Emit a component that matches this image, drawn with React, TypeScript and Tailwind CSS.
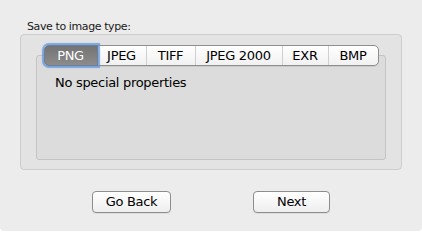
export default function App() {
  const tabs = [
    { label: 'PNG', w: 'w-[54px]' },
    { label: 'JPEG', w: 'w-[48px]' },
    { label: 'TIFF', w: 'w-[49px]' },
    { label: 'JPEG 2000', w: 'w-[87px]' },
    { label: 'EXR', w: 'w-[46px]' },
    { label: 'BMP', w: 'w-[50px]' },
  ];

  return (
    <div className="w-[422px] h-[231px] bg-[#ececec] flex flex-col pt-[20px] px-[20px] text-black font-['DejaVu_Sans',sans-serif] rounded-b-[4px]">
      <div className="h-[14px] pl-[7px] text-[11px] leading-[13px] tracking-[-0.4px] text-[#1a1a1a]">Save to image type:</div>

      {/* group box */}
      <div className="h-[136px] flex flex-col rounded-[4px] border border-[#cdcdcd] bg-[#e3e3e3] px-[15px] pt-[10px] pb-[9px]">
        {/* tab bar */}
        <div className="relative z-10 self-center flex h-[21px] rounded-[5px] border border-[#8e8e8e] bg-gradient-to-b from-[#ffffff] to-[#f1f1f1] shadow-[0_1px_0_rgba(0,0,0,0.08)]">
          {tabs.map((t, i) =>
            i === 0 ? (
              <div
                key={t.label}
                className={`${t.w} -my-px -ml-px flex items-center justify-center rounded-l-[5px] border border-[#6b7f99] bg-gradient-to-b from-[#737373] to-[#8c8c8c] text-white text-[13px] tracking-[-0.3px] shadow-[0_0_1px_2px_rgba(105,155,222,0.85)]`}
              >
                {t.label}
              </div>
            ) : (
              <div
                key={t.label}
                className={`${t.w} flex items-center justify-center text-[13px] tracking-[-0.3px] ${i > 1 ? 'border-l border-[#cfcfcf]' : ''}`}
              >
                {t.label}
              </div>
            )
          )}
        </div>

        {/* tab content box */}
        <div className="-mt-[11px] flex-1 rounded-[3px] border border-[#c4c4c4] bg-[#dcdcdc] pt-[19px] pl-[18px]">
          <div className="text-[13px] leading-[16px] tracking-[-0.3px]">No special properties</div>
        </div>
      </div>

      {/* buttons */}
      <div className="mt-[21px] flex">
        <button className="ml-[72px] w-[79px] h-[22px] rounded-[4px] border border-[#8d8d8d] bg-gradient-to-b from-[#ffffff] to-[#eeeeee] text-[13px] leading-[18px] tracking-[-0.3px] shadow-[0_1px_0_rgba(0,0,0,0.06)]">
          Go Back
        </button>
        <button className="ml-[82px] w-[77px] h-[22px] rounded-[4px] border border-[#8d8d8d] bg-gradient-to-b from-[#ffffff] to-[#eeeeee] text-[13px] leading-[18px] tracking-[-0.3px] shadow-[0_1px_0_rgba(0,0,0,0.06)]">
          Next
        </button>
      </div>
    </div>
  );
}
